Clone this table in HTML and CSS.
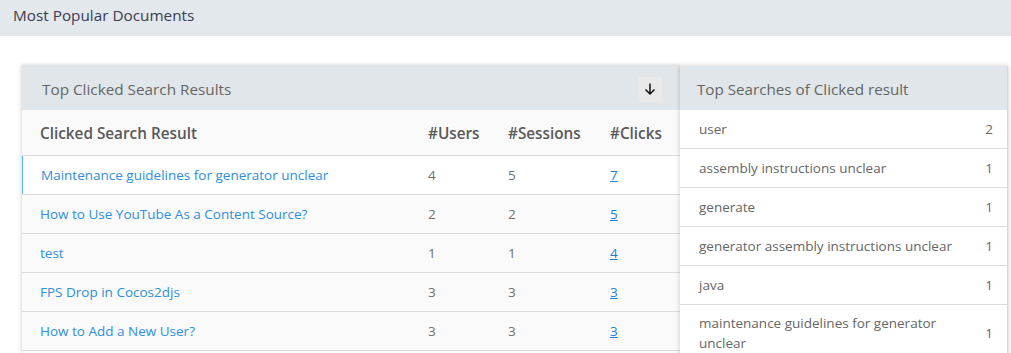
FILE: index.html
```html
<!DOCTYPE html>
<html>
<head>
<meta charset="utf-8">
<link rel="stylesheet" href="styles.css">
</head>
<body>
<div class="topbar">Most Popular Documents</div>
<div class="content">
  <div class="card">
    <div class="card-head">
      <span class="card-title">Top Clicked Search Results</span>
      <button class="dl-btn" aria-label="Download">
        <svg width="14" height="14" viewBox="0 0 14 14"><path d="M7 1.5v10.5M2.5 7.5L7 12l4.5-4.5" fill="none" stroke="#111" stroke-width="1.5"/></svg>
      </button>
    </div>
    <div class="scroll">
      <table class="results">
        <thead>
          <tr><th class="c-title">Clicked Search Result</th><th class="c-users">#Users</th><th class="c-sess">#Sessions</th><th class="c-clicks">#Clicks</th></tr>
        </thead>
        <tbody>
          <tr class="selected"><td class="c-title"><a href="#">Maintenance guidelines for generator unclear</a></td><td>4</td><td>5</td><td><a class="num" href="#">7</a></td></tr>
          <tr><td class="c-title"><a href="#">How to Use YouTube As a Content Source?</a></td><td>2</td><td>2</td><td><a class="num" href="#">5</a></td></tr>
          <tr><td class="c-title"><a href="#">test</a></td><td>1</td><td>1</td><td><a class="num" href="#">4</a></td></tr>
          <tr><td class="c-title"><a href="#">FPS Drop in Cocos2djs</a></td><td>3</td><td>3</td><td><a class="num" href="#">3</a></td></tr>
          <tr><td class="c-title"><a href="#">How to Add a New User?</a></td><td>3</td><td>3</td><td><a class="num" href="#">3</a></td></tr>
          <tr><td class="c-title"><a href="#">Generator assembly instructions</a></td><td>2</td><td>2</td><td><a class="num" href="#">3</a></td></tr>
          <tr><td class="c-title"><a href="#">Java Getting Started</a></td><td>2</td><td>2</td><td><a class="num" href="#">2</a></td></tr>
          <tr><td class="c-title"><a href="#">Configuring Search Filters</a></td><td>2</td><td>2</td><td><a class="num" href="#">2</a></td></tr>
          <tr><td class="c-title"><a href="#">Release Notes</a></td><td>1</td><td>2</td><td><a class="num" href="#">2</a></td></tr>
          <tr><td class="c-title"><a href="#">Troubleshooting Login Issues</a></td><td>1</td><td>1</td><td><a class="num" href="#">2</a></td></tr>
          <tr><td class="c-title"><a href="#">Installing the Plugin</a></td><td>1</td><td>1</td><td><a class="num" href="#">1</a></td></tr>
          <tr><td class="c-title"><a href="#">User Permissions Overview</a></td><td>1</td><td>1</td><td><a class="num" href="#">1</a></td></tr>
          <tr><td class="c-title"><a href="#">Content Sources</a></td><td>1</td><td>1</td><td><a class="num" href="#">1</a></td></tr>
          <tr><td class="c-title"><a href="#">Analytics Dashboard</a></td><td>1</td><td>1</td><td><a class="num" href="#">1</a></td></tr>
          <tr><td class="c-title"><a href="#">Search Tuning Guide</a></td><td>1</td><td>1</td><td><a class="num" href="#">1</a></td></tr>
          <tr><td class="c-title"><a href="#">API Reference</a></td><td>1</td><td>1</td><td><a class="num" href="#">1</a></td></tr>
          <tr><td class="c-title"><a href="#">Crawling Websites</a></td><td>1</td><td>1</td><td><a class="num" href="#">1</a></td></tr>
          <tr><td class="c-title"><a href="#">Security Best Practices</a></td><td>1</td><td>1</td><td><a class="num" href="#">1</a></td></tr>
          <tr><td class="c-title"><a href="#">Exporting Reports</a></td><td>1</td><td>1</td><td><a class="num" href="#">1</a></td></tr>
          <tr><td class="c-title"><a href="#">Generator Safety Checklist</a></td><td>1</td><td>1</td><td><a class="num" href="#">1</a></td></tr>
        </tbody>
      </table>
    </div>
  </div>
  <div class="side">
    <div class="side-head">Top Searches of Clicked result</div>
    <ul class="side-list">
      <li><span class="q">user</span><span class="n">2</span></li>
      <li><span class="q">assembly instructions unclear</span><span class="n">1</span></li>
      <li><span class="q">generate</span><span class="n">1</span></li>
      <li><span class="q">generator assembly instructions unclear</span><span class="n">1</span></li>
      <li><span class="q">java</span><span class="n">1</span></li>
      <li><span class="q">maintenance guidelines for generator unclear</span><span class="n">1</span></li>
    </ul>
  </div>
</div>
</body>
</html>
```

FILE: styles.css
```css
html, body {
  margin: 0;
  padding: 0;
  overflow: hidden;
  height: 353px;
}
body {
  font-family: "Open Sans", "DejaVu Sans", sans-serif;
  background: #ffffff;
  color: #555;
}
.topbar {
  height: 36px;
  box-sizing: border-box;
  padding: 5px 13px 0;
  background: #e2e8ec;
  color: #3c3c4e;
  font-size: 15.3px;
  line-height: 20px;
}
.content {
  display: flex;
  align-items: flex-start;
  padding: 29px 0 0 22px;
}
.card {
  width: 658px;
  flex: none;
  background: #fafafa;
  box-shadow: -1px 0 4px rgba(0,0,0,0.12), 0 -1px 3px rgba(0,0,0,0.06);
}
.card-head {
  height: 45px;
  box-sizing: border-box;
  background: #e0e6e9;
  display: flex;
  align-items: center;
  padding: 3px 18px 0 20px;
}
.card-title {
  flex: 1;
  font-size: 15.3px;
  color: #666;
}
.dl-btn {
  width: 24px;
  height: 25px;
  border: none;
  padding: 0;
  background: #e9e9e9;
  display: flex;
  align-items: center;
  justify-content: center;
}
.scroll {
  height: 243px;
  overflow-y: scroll;
}
.scroll::-webkit-scrollbar { width: 6px; }
.scroll::-webkit-scrollbar-track { background: #f3f3f3; }
.scroll::-webkit-scrollbar-thumb { background: #a3a3a3; border-radius: 3px; }
.results {
  width: 100%;
  border-collapse: collapse;
  font-size: 13.5px;
}
.results th {
  height: 45px;
  text-align: left;
  font-weight: 600;
  font-size: 15.3px;
  color: #595959;
  border-bottom: 1px solid #dcdcdc;
  padding: 0;
}
.results td {
  height: 38px;
  padding: 0;
  border-bottom: 1px solid #dcdcdc;
  color: #707070;
}
.results .c-title { padding-left: 18px; }
.c-users { width: 80px; }
.c-sess { width: 102px; }
.c-clicks { width: 70px; }
.results a { color: #2e8ee0; text-decoration: none; }
.results a.num { color: #1f7fd8; text-decoration: underline; }
.results tr.selected td { background: #ffffff; }
.results tr.selected td.c-title { box-shadow: inset 1px 0 0 #5bbcf2; padding-left: 19px; }
.side {
  width: 328px;
  flex: none;
  margin-top: 1px;
  background: #ffffff;
  box-shadow: 0 0 5px rgba(0,0,0,0.2);
  border-right: 1px solid #d8d8d8;
  box-sizing: border-box;
}
.side-head {
  height: 44px;
  box-sizing: border-box;
  padding: 13px 16px 0 17px;
  background: #e0e6e9;
  color: #666;
  font-size: 15.2px;
  line-height: 20px;
}
.side-list {
  list-style: none;
  margin: 0;
  padding: 0;
}
.side-list li {
  display: flex;
  align-items: center;
  min-height: 22px;
  padding: 8px 14px 8px 19px;
  border-bottom: 1px solid #dcdcdc;
  font-size: 13.5px;
  color: #666;
  line-height: 20px;
}
.side-list .q { flex: 1; padding-right: 22px; }
.side-list .n { flex: none; }
```
